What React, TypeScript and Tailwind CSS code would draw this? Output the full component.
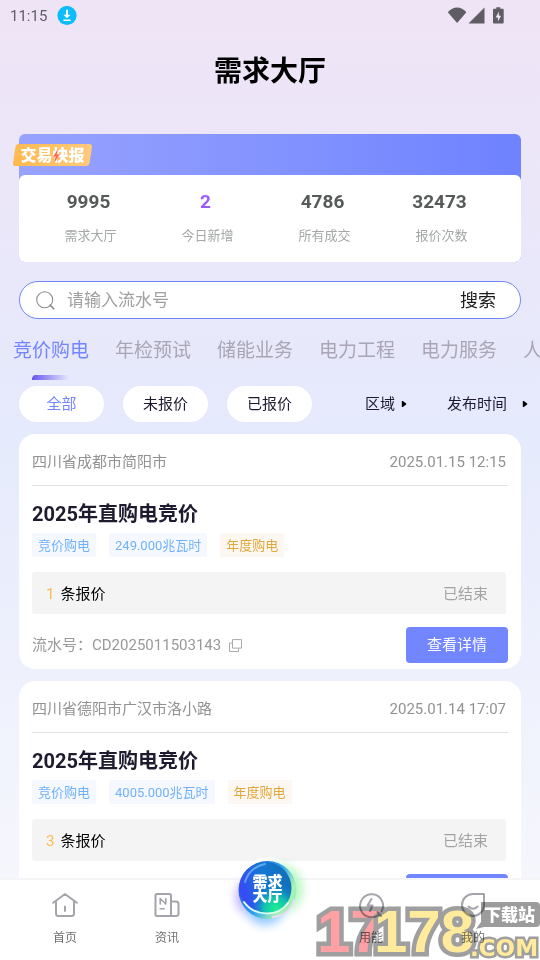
import React, { useState } from "react";

const stats = [
  { value: "9995", label: "需求大厅" },
  { value: "2", label: "今日新增", accent: true },
  { value: "4786", label: "所有成交" },
  { value: "32473", label: "报价次数" },
];

const tabs = ["竞价购电", "年检预试", "储能业务", "电力工程", "电力服务", "人"];
const statuses = ["全部", "未报价", "已报价"];

interface Demand {
  region: string;
  time: string;
  title: string;
  amount: string;
  quotes: number;
  serial?: string;
}

const demands: Demand[] = [
  {
    region: "四川省成都市简阳市",
    time: "2025.01.15 12:15",
    title: "2025年直购电竞价",
    amount: "249.000兆瓦时",
    quotes: 1,
    serial: "CD2025011503143",
  },
  {
    region: "四川省德阳市广汉市洛小路",
    time: "2025.01.14 17:07",
    title: "2025年直购电竞价",
    amount: "4005.000兆瓦时",
    quotes: 3,
  },
];

function StatusBar() {
  return (
    <div className="flex h-8 shrink-0 items-center pl-[10px] pr-[35px] text-[#5f5c64]">
      <span className="text-[15px]">11:15</span>
      <svg className="ml-[10px] size-5" viewBox="0 0 20 20" aria-hidden="true">
        <circle cx="10" cy="9.500" r="9.600" fill="#0cbcfb" />
        <path d="M9 3.700h2v5h2.600L10 12.300 6.400 8.700H9zM6.400 13.500h7.200v1.600H6.400z" fill="#fff" />
      </svg>
      <svg className="ml-auto h-[18px] w-[58px]" viewBox="0 0 58 18" aria-hidden="true">
        <path d="M.8 5.200C6-1.100 14.200-1.100 19.400 5.200L10.100 16z" fill="currentColor" />
        <path d="M21.500 16.400 37.500.400v16z" fill="currentColor" />
        <path
          d="M49.300.200h4v1.600h2.200c.8 0 1.200.5 1.200 1.200v12.300c0 .8-.5 1.300-1.200 1.300h-8.300c-.8 0-1.200-.5-1.200-1.300V3c0-.7.4-1.200 1.200-1.200h2.100z"
          fill="currentColor"
        />
        <path d="M51.900 4.800v4h2.200l-3.200 5.800v-4.200h-2.300z" fill="#efe6f7" />
      </svg>
    </div>
  );
}

function StatsPanel() {
  return (
    <section className="relative mx-[19px] mt-[22px] rounded-md bg-linear-to-r from-[#98a3ff] to-[#6f82ff] pt-[41px]">
      <div className="absolute -left-[6px] top-[10px] flex h-[22px] w-[79px] items-center justify-center">
        <svg className="absolute inset-0 size-full" viewBox="0 0 79 22" aria-hidden="true">
          <defs>
            <linearGradient id="ribbon">
              <stop offset="0" stopColor="#ffb94e" />
              <stop offset="1" stopColor="#ffca7c" />
            </linearGradient>
          </defs>
          <path d="M6 0h70q3 0 3 3l-2.500 16q-.5 3-3.500 3H2.500q-3 0-2.500-3L2.500 3Q3 0 6 0z" fill="url(#ribbon)" />
        </svg>
        <span className="relative pt-[2px] text-[16px] leading-[22px] font-black whitespace-nowrap text-white">
          交易快报
        </span>
        <svg className="absolute left-[40px] top-[5px] h-[14px] w-[7px]" viewBox="0 0 7 14" aria-hidden="true">
          <path d="M4.800 0 .3 7.600h2.300L1.200 14 6.700 5.600H4z" fill="#ff6a5c" />
        </svg>
      </div>
      <dl className="grid grid-cols-4 rounded-md bg-white pr-[21px] pl-[13px] pt-[15px] pb-4 text-center">
        {stats.map((s) => (
          <div key={s.label} className="flex flex-col-reverse gap-3">
            <dt className="text-[13px] leading-5 text-[#a3a8a6]">{s.label}</dt>
            <dd
              className={
                s.accent
                  ? "pr-1 text-[19px] leading-6 font-bold text-[#9a5cf8]"
                  : "pr-1 text-[19px] leading-6 font-bold text-[#565a59]"
              }
            >
              {s.value}
            </dd>
          </div>
        ))}
      </dl>
    </section>
  );
}

function SearchBox() {
  return (
    <form
      onSubmit={(e) => e.preventDefault()}
      className="mx-[19px] mt-[19px] flex h-[38px] items-center rounded-full border border-[#7486ff] bg-white pr-6 pl-4"
    >
      <svg className="size-[19px] shrink-0" viewBox="0 0 19 19" fill="none" stroke="#8c8c8c" aria-hidden="true">
        <circle cx="8.700" cy="8.700" r="8" strokeWidth="1.100" />
        <path d="m13.600 13.600 4.600 4.600" strokeWidth="1.600" />
      </svg>
      <input
        type="text"
        aria-label="请输入流水号"
        placeholder="请输入流水号"
        className="ml-3 min-w-0 flex-1 bg-transparent text-[17px] leading-6 outline-none placeholder:text-[#a0a0a0]"
      />
      <button type="submit" className="pt-[2px] text-[18px] leading-6 text-[#1c1c1c]">
        搜索
      </button>
    </form>
  );
}

function Tabs() {
  const [active, setActive] = useState(0);
  return (
    <nav className="mt-[18px] flex gap-[26px] overflow-hidden pl-[13px]">
      {tabs.map((t, i) => (
        <button
          key={t}
          type="button"
          onClick={() => setActive(i)}
          className={
            i === active
              ? "flex shrink-0 flex-col items-start text-[19px] leading-7 whitespace-nowrap text-[#7385ff]"
              : "flex shrink-0 flex-col items-start text-[19px] leading-7 whitespace-nowrap text-[#a9a5b4]"
          }
        >
          {t}
          <svg className="mt-[10px] ml-[19px] h-[5px] w-[37px]" viewBox="0 0 37 5" aria-hidden="true">
            <defs>
              <linearGradient id="underline">
                <stop offset="0" stopColor="#6b55f0" />
                <stop offset="1" stopColor="#6b55f0" stopOpacity="0" />
              </linearGradient>
            </defs>
            {i === active && <path d="M3 0h34v5H0V3q1-3 3-3z" fill="url(#underline)" />}
          </svg>
        </button>
      ))}
    </nav>
  );
}

function FilterSelect({ label }: { label: string }) {
  return (
    <select aria-label={label} className="appearance-none bg-transparent text-[15px] text-[#1d1a2e] outline-none">
      <option>{label}</option>
    </select>
  );
}

function Arrow() {
  return (
    <svg className="h-[8px] w-[6px]" viewBox="0 0 6 8" aria-hidden="true">
      <path d="M.8 1h1L5.200 3.600v.8L1.800 7h-1z" fill="#000" />
    </svg>
  );
}

function Filters() {
  const [active, setActive] = useState(0);
  return (
    <div className="mt-[6px] flex items-center justify-between pr-3 pl-[19px]">
      <div className="flex gap-[19px]">
        {statuses.map((s, i) => (
          <button
            key={s}
            type="button"
            onClick={() => setActive(i)}
            className={
              i === active
                ? "h-9 w-[85px] rounded-full bg-white text-[15px] text-[#7385ff]"
                : "h-9 w-[85px] rounded-full bg-white text-[15px] text-[#1d1a2e]"
            }
          >
            {s}
          </button>
        ))}
      </div>
      <div className="flex items-center gap-10">
        <div className="flex items-center gap-[5px]">
          <FilterSelect label="区域" />
          <Arrow />
        </div>
        <div className="flex items-center gap-[14px]">
          <FilterSelect label="发布时间" />
          <Arrow />
        </div>
      </div>
    </div>
  );
}

function DemandCard({ d }: { d: Demand }) {
  return (
    <article className="rounded-2xl bg-white px-[13px] pb-[6px]">
      <header className="flex h-[52px] items-center justify-between border-b border-[#e3e3e3] pt-[6px] pr-[2px] text-[15px] text-[#929292]">
        <span>{d.region}</span>
        <time>{d.time}</time>
      </header>
      <h2 className="mt-[14px] text-[20px] leading-[29px] font-bold text-[#1f1b2e]">{d.title}</h2>
      <div className="mt-1 flex gap-[13px] text-[13px] leading-[22px]">
        <span className="rounded-xs bg-[#f5f9ff] px-[6px] pt-[2px] text-[#71b1fb]">竞价购电</span>
        <span className="rounded-xs bg-[#f5f9ff] px-[6px] pt-[2px] text-[#71b1fb]">{d.amount}</span>
        <span className="rounded-xs bg-[#fcf8f1] px-[6px] pt-[2px] text-[#e3a63c]">年度购电</span>
      </div>
      <div className="mt-[15px] mr-[2px] flex h-[42px] items-center rounded-[3px] bg-[#f4f4f4] pt-[2px] pr-[18px] pl-[14px] text-[15px]">
        <span className="text-[#ffb94e]">{d.quotes}</span>
        <span className="ml-[6px] text-black">条报价</span>
        <span className="ml-auto text-[#a3a3a3]">已结束</span>
      </div>
      <footer className="mt-[13px] flex h-9 items-center text-[15px] text-[#999]">
        {d.serial && (
          <>
            <span>流水号：{d.serial}</span>
            <button type="button" aria-label="复制" className="ml-2">
              <svg className="size-[13px]" viewBox="0 0 13 13" fill="none" stroke="#aaa" aria-hidden="true">
                <path d="M3.500.600h9v8.500h-9z" />
                <path d="M3.500 4h-3v8.500h9V9.300" />
              </svg>
            </button>
          </>
        )}
        <button type="button" className="ml-auto h-9 w-[102px] rounded-sm bg-[#7286ff] text-white">
          查看详情
        </button>
      </footer>
    </article>
  );
}

function NavItem({ label, children }: { label: string; children: React.ReactNode }) {
  return (
    <a href="#" className="flex flex-col items-center text-[12px] leading-4 text-[#707070]">
      <svg
        className="mb-3 size-[26px]"
        viewBox="0 0 26 26"
        fill="none"
        stroke="#a4a4ab"
        strokeWidth="2"
        strokeLinejoin="round"
        strokeLinecap="round"
        aria-hidden="true"
      >
        {children}
      </svg>
      {label}
    </a>
  );
}

function HallBall() {
  return (
    <a href="#" className="relative -mt-[43px] block size-[84px] justify-self-center">
      <svg className="size-full" viewBox="0 0 84 84" aria-hidden="true">
        <defs>
          <linearGradient id="ball" x1="0.100" y1="0.600" x2="0.900" y2="0.400">
            <stop offset="0" stopColor="#354df4" />
            <stop offset=".5" stopColor="#1479d2" />
            <stop offset="1" stopColor="#1270bd" />
          </linearGradient>
          <radialGradient id="mint" cx=".7" cy=".9" r=".5">
            <stop offset="0" stopColor="#20f08e" />
            <stop offset=".45" stopColor="#10d7a6" stopOpacity=".8" />
            <stop offset="1" stopColor="#1479d2" stopOpacity="0" />
          </radialGradient>
          <linearGradient id="rim" x1="0" y1="0.200" x2="1" y2="0.800">
            <stop offset="0" stopColor="#2746d8" />
            <stop offset=".5" stopColor="#2ba2ee" />
            <stop offset=".8" stopColor="#a9f3b4" />
            <stop offset="1" stopColor="#8ff0b0" />
          </linearGradient>
          <filter id="glow" x="-50%" y="-50%" width="200%" height="200%">
            <feGaussianBlur stdDeviation="5" />
          </filter>
        </defs>
        <circle cx="41" cy="41" r="33" fill="#fff" opacity=".6" />
        <g filter="url(#glow)" opacity=".55">
          <circle cx="51" cy="40" r="25" fill="#7df391" />
          <circle cx="29" cy="48" r="20" fill="#8b62ff" />
          <circle cx="38" cy="56" r="20" fill="#3b9cff" />
        </g>
        <circle cx="40.500" cy="41" r="29" fill="url(#rim)" />
        <circle cx="38.500" cy="39" r="26" fill="url(#ball)" />
        <circle cx="38.500" cy="39" r="26" fill="url(#mint)" />
        <path d="M17 53c10 14 33 16 44 1" fill="none" stroke="#d8fff2" strokeWidth="2" strokeLinecap="round" />
        <path d="M18 33c3-10 10-16 20-18" fill="none" stroke="#8ecaff" strokeWidth="2" strokeLinecap="round" opacity=".6" />
        <path d="M46 68c10-1 18-7 21-17" fill="none" stroke="#f1d9fa" strokeWidth="2" strokeLinecap="round" />
      </svg>
      <span className="absolute inset-x-0 top-[26px] pr-[3px] text-center text-[15px] leading-[14px] font-black text-white">
        需求
        <br />
        大厅
      </span>
    </a>
  );
}

function BottomNav() {
  return (
    <nav className="relative grid h-[82px] shrink-0 grid-cols-5 items-start border-t-2 border-[#f5f5f7] bg-white pt-3 pr-4 pl-[14px]">
      <NavItem label="首页">
        <path d="M1.200 10.800 13 2l11.800 8.800M4 9.500v12q0 2.500 2.500 2.500h13q2.500 0 2.500-2.500v-12M13 14.500v4.500" />
      </NavItem>
      <NavItem label="资讯">
        <path d="M3 2h12.500q1.500 0 1.500 1.500V24H3q-1.500 0-1.500-1.500v-19Q1.500 2 3 2zM17 9.500h5q2.500 0 2.500 2.500v9.500q0 2.500-2.500 2.500h-5" />
        <path d="M6.200 12V6.500l5.600 5.500V6.500M6.200 16.800h4" strokeWidth="1.600" />
      </NavItem>
      <HallBall />
      <NavItem label="用能">
        <path d="M21 22.500a11.500 11.500 0 1 1 2.500-3M13.500 7l-4 6.500h5L12 19M19.500 20l3.500 4" />
      </NavItem>
      <NavItem label="我的">
        <path d="M24 2v11a11 11 0 1 1-11-11zM8.500 14.500q4.500 4.500 9 0" />
      </NavItem>
    </nav>
  );
}

function SiteMark() {
  return (
    <svg
      className="pointer-events-none absolute right-0 bottom-0 h-[64px] w-[226px] mix-blend-multiply"
      viewBox="0 0 226 64"
      role="img"
      aria-label="17178.com 下载站"
    >
      <g
        fontFamily="'Liberation Sans', sans-serif"
        fontWeight="700"
        fontSize="60"
        stroke="#9f9f9f"
        strokeWidth="9"
        strokeLinejoin="miter"
        paintOrder="stroke"
      >
        <text x="3" y="56" fill="#ffa0a5">
          17
        </text>
        <text x="60" y="56" fill="#ffeb9b">
          178
        </text>
      </g>
      <path d="M167 6h55q4 0 4 4v17q0 4-4 4h-52l-8 2 5-7z" fill="#9c9c9c" />
      <text x="170" y="25" fill="#fff" fontFamily="'Noto Sans CJK SC', sans-serif" fontWeight="900" fontSize="17">
        下载站
      </text>
      <text
        x="156"
        y="60"
        fill="#ffeb9b"
        stroke="#9f9f9f"
        strokeWidth="5"
        paintOrder="stroke"
        fontFamily="'DejaVu Sans', sans-serif"
        fontWeight="700"
        fontSize="23"
      >
        .COM
      </text>
    </svg>
  );
}

export default function App() {
  return (
    <div className="relative flex h-screen flex-col overflow-hidden bg-linear-to-b from-[#efe4f6] via-[#e5eafc] via-45% to-[#f9f9fd] font-['Roboto','Noto_Sans_CJK_SC',sans-serif]">
      <StatusBar />
      <main className="min-h-0 flex-1 overflow-hidden">
        <h1 className="flex h-20 items-center justify-center text-[28px] font-bold text-black">需求大厅</h1>
        <StatsPanel />
        <SearchBox />
        <Tabs />
        <Filters />
        <div className="mx-[19px] mt-3 flex flex-col gap-3">
          {demands.map((d) => (
            <DemandCard key={d.time} d={d} />
          ))}
        </div>
      </main>
      <BottomNav />
      <SiteMark />
    </div>
  );
}
